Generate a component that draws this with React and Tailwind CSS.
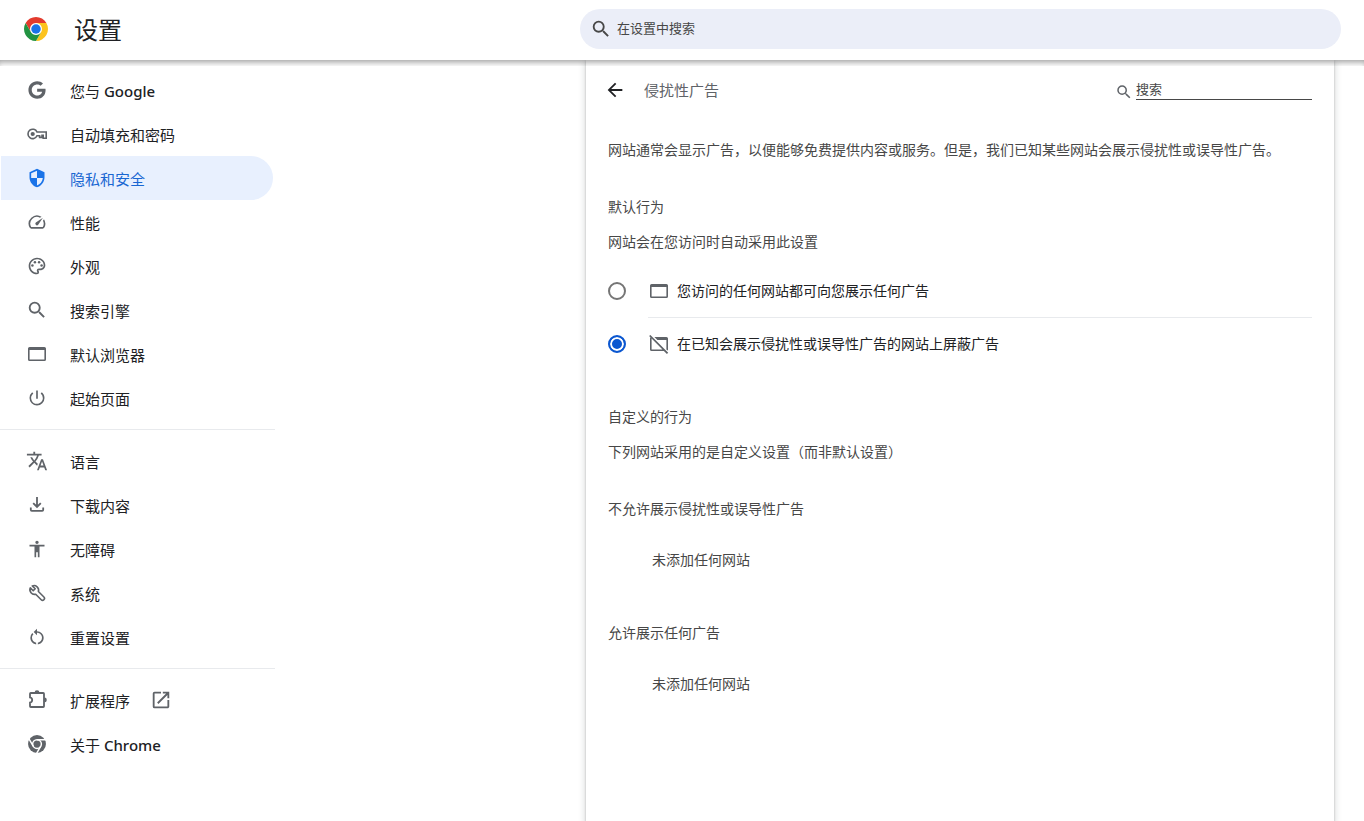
import { useState } from "react";
import {
  MdAccessibility,
  MdArrowBack,
  MdOpenInNew,
  MdOutlinePalette,
  MdOutlineSpeed,
  MdPowerSettingsNew,
  MdRestartAlt,
  MdSearch,
  MdSecurity,
  MdTranslate,
} from "react-icons/md";
import { FaGoogle } from "react-icons/fa";

const svgProps = { viewBox: "0 0 20 20", fill: "none", stroke: "currentColor", strokeWidth: 1.6, "aria-hidden": true };

function ChromeLogo({ className }) {
  return (
    <svg viewBox="0 0 48 48" className={className} aria-hidden="true">
      <circle cx="24" cy="24" r="12" fill="#fff" />
      <path fill="#e33b2e" d="M24 12h20.78A24 24 0 0 0 3.22 12l10.39 18A12 12 0 0 1 24 12Z" />
      <path fill="#fcc31e" d="M34.39 30 24 48a24 24 0 0 0 20.78-36H24a12 12 0 0 1 10.39 18Z" />
      <path fill="#229342" d="M13.61 30 3.22 12A24 24 0 0 0 24 48l10.39-18a12 12 0 0 1-20.78 0Z" />
      <circle cx="24" cy="24" r="9.5" fill="#1a73e8" />
    </svg>
  );
}

function ChromeMono({ className }) {
  return (
    <svg viewBox="0 0 48 48" className={className} aria-hidden="true">
      <circle cx="24" cy="24" r="21.5" fill="currentColor" />
      <g fill="none" stroke="#fff" strokeWidth="3.6">
        <circle cx="24" cy="24" r="10.5" />
        <path d="M24 13.5h22M14.9 29.2 4 10.3M33.1 29.2 22.1 48.2" />
      </g>
    </svg>
  );
}

function KeyIcon({ className }) {
  return (
    <svg {...svgProps} className={className}>
      <path d="M10 8h9.200v6.200h-3V11.400h-1.200v2h-2.400v-1.600h-2.600a4.700 4.700 0 1 1 0-3.800Z" />
      <circle cx="5.700" cy="10" r="2.100" fill="currentColor" stroke="none" />
    </svg>
  );
}

function WindowIcon({ className }) {
  return (
    <svg {...svgProps} stroke="none" fill="currentColor" fillRule="evenodd" className={className}>
      <path d="M2.6 3h14.8A1.6 1.6 0 0 1 19 4.6v10.8a1.6 1.6 0 0 1-1.6 1.6H2.6A1.6 1.6 0 0 1 1 15.4V4.6A1.6 1.6 0 0 1 2.6 3Zm0 3v9.4h14.8V6H2.6Z" />
    </svg>
  );
}

function WindowOffIcon({ className }) {
  return (
    <svg {...svgProps} stroke="none" fill="currentColor" fillRule="evenodd" className={className}>
      <path d="M5.4 3h12A1.6 1.6 0 0 1 19 4.6v10.8c0 .5-.2.9-.5 1.2l-1.1-1.1V6H8.4l-3-3Z" />
      <path d="M1.4.9 19.200 18.700l-1.300 1.300-3-3H2.6A1.6 1.6 0 0 1 1 15.4V4.6c0-.5.2-.9.5-1.2L.1 2.100 1.400.9Zm1.2 3.6v10.9h10.9L2.600 4.5Z" />
    </svg>
  );
}

function DownloadIcon({ className }) {
  return (
    <svg {...svgProps} strokeWidth="1.8" className={className}>
      <path d="M10 2v9.6M6.2 8.2 10 12l3.8-3.8M3.8 12.6v2.2c0 .6.4 1 1 1h10.4c.6 0 1-.4 1-1v-2.2" />
    </svg>
  );
}

function WrenchIcon({ className }) {
  return (
    <svg {...svgProps} strokeLinejoin="round" className={className}>
      <path d="M3.300 4.900 6.200 7.800 8.200 5.800 5.300 2.900A4.600 4.600 0 0 1 11.400 8.500L16.900 14a1.900 1.900 0 0 1-2.700 2.700L8.700 11.200A4.600 4.600 0 0 1 3.300 4.900Z" />
    </svg>
  );
}

function ExtensionIcon({ className }) {
  return (
    <svg {...svgProps} strokeWidth="1.8" className={className}>
      <path d="M3.8 3h12.4a.8.8 0 0 1 .8.8v12.4a.8.8 0 0 1-.8.8H3.8a.8.8 0 0 1-.8-.8v-3.6c1.4-.3 2.2-1.3 2.2-2.6S4.4 7.7 3 7.4V3.8a.8.8 0 0 1 .8-.8Z" />
      <path stroke="none" fill="currentColor" d="M7.6 2.6a2.400 2.400 0 0 1 4.800 0ZM17.400 7.600a2.400 2.400 0 0 1 0 4.800Z" />
    </svg>
  );
}

const groups = [
  [
    { label: "您与", latin: "Google", icon: FaGoogle, iconSize: "size-[18px]" },
    { label: "自动填充和密码", icon: KeyIcon },
    { label: "隐私和安全", icon: MdSecurity, active: true },
    { label: "性能", icon: MdOutlineSpeed },
    { label: "外观", icon: MdOutlinePalette },
    { label: "搜索引擎", icon: MdSearch, iconSize: "size-[22px]" },
    { label: "默认浏览器", icon: WindowIcon },
    { label: "起始页面", icon: MdPowerSettingsNew },
  ],
  [
    { label: "语言", icon: MdTranslate, iconSize: "size-[22px]" },
    { label: "下载内容", icon: DownloadIcon },
    { label: "无障碍", icon: MdAccessibility },
    { label: "系统", icon: WrenchIcon },
    { label: "重置设置", icon: MdRestartAlt },
  ],
  [
    { label: "扩展程序", icon: ExtensionIcon, external: true },
    { label: "关于", latin: "Chrome", icon: ChromeMono },
  ],
];

function NavItem({ label, latin, icon: Icon, iconSize = "size-5", active, external }) {
  return (
    <a
      href="#"
      aria-current={active ? "page" : undefined}
      className={`ml-px mr-0.5 flex h-11 items-center rounded-r-full pl-[26px] text-[15px] ${
        active ? "bg-[#e8f0fe] text-[#1967d2]" : "text-[#202124]"
      }`}
    >
      <span className={`flex size-5 items-center justify-center ${active ? "text-[#1a73e8]" : "text-[#5f6368]"}`}>
        <Icon className={`shrink-0 ${iconSize}`} />
      </span>
      <span className="ml-[23px] pt-px leading-5">
        {label}
        {latin && <span className="font-medium"> {latin}</span>}
      </span>
      {external && <MdOpenInNew className="ml-5 size-[22px] text-[#5f6368]" />}
    </a>
  );
}

function AdOption({ id, icon: Icon, checked, onChange, children }) {
  return (
    <div className="flex h-[52px] items-center">
      <input
        type="radio"
        name="ads"
        id={id}
        checked={checked}
        onChange={onChange}
        className="size-[18px] appearance-none rounded-full border-2 border-[#757575] checked:border-[#0b57d0] checked:bg-[#0b57d0] checked:shadow-[inset_0_0_0_2px_#fff]"
      />
      <label htmlFor={id} className="ml-[23px] flex items-center gap-2 text-[#202124]">
        <Icon className="size-5 text-[#5f6368]" />
        {children}
      </label>
    </div>
  );
}

export default function App() {
  const [choice, setChoice] = useState("block");
  return (
    <div className="flex min-h-screen flex-col bg-white font-['Noto_Sans','Noto_Sans_CJK_SC',sans-serif] text-[#202124]">
      <header className="relative z-10 flex h-[60px] items-center justify-between bg-white pl-6 pr-[23px]">
        <div className="flex items-center">
          <ChromeLogo className="mb-0.5 size-6" />
          <h1 className="ml-[26px] text-2xl">设置</h1>
        </div>
        <label className="mb-0.5 flex h-10 w-full max-w-[761px] items-center gap-[5px] rounded-full bg-[#ebeef8] pl-2.5 pr-4">
          <MdSearch className="size-[22px] text-[#474747]" />
          <input
            type="text"
            aria-label="在设置中搜索"
            placeholder="在设置中搜索"
            className="min-w-0 flex-1 bg-transparent text-[13px] outline-none placeholder:text-[#474747]"
          />
        </label>
        <div className="pointer-events-none absolute inset-x-0 top-full h-1.5 shadow-[inset_0_5px_6px_-3px_rgba(0,0,0,0.4)]" />
      </header>

      <div className="flex flex-1">
        <nav className="w-[275px] shrink-0 pt-2">
          {groups.map((items, i) => (
            <div key={i} className={i > 0 ? "mt-[9px] border-t border-[#e8eaed] pt-[9px]" : ""}>
              {items.map((item) => (
                <NavItem key={item.label} {...item} />
              ))}
            </div>
          ))}
        </nav>

        <main className="flex flex-1 justify-end pr-[30px]">
          <section className="w-full max-w-[748px] bg-white px-[22px] text-sm leading-5 text-[#474747] shadow-[0_1px_2px_0_rgba(60,64,67,0.3),0_2px_6px_2px_rgba(60,64,67,0.15)]">
            <div className="flex h-[60px] items-center">
              <button type="button" aria-label="返回" className="-ml-1 text-[#202124]">
                <MdArrowBack className="size-[22px]" />
              </button>
              <h2 className="ml-[18px] flex-1 text-[15px] text-[#5f6368]">侵扰性广告</h2>
              <label className="flex items-end gap-[3px]">
                <MdSearch className="mb-px size-[18px] text-[#5f6368]" />
                <input
                  type="text"
                  aria-label="搜索"
                  placeholder="搜索"
                  className="mb-0.5 h-[22px] w-44 border-b border-[#474747] bg-transparent text-[13px] outline-none placeholder:text-[#474747]"
                />
              </label>
            </div>

            <p className="mt-5">网站通常会显示广告，以便能够免费提供内容或服务。但是，我们已知某些网站会展示侵扰性或误导性广告。</p>

            <h3 className="mt-[37px]">默认行为</h3>
            <p className="mb-[13px] mt-[15px]">网站会在您访问时自动采用此设置</p>
            <AdOption id="ads-allow" icon={WindowIcon} checked={choice === "allow"} onChange={() => setChoice("allow")}>
              您访问的任何网站都可向您展示任何广告
            </AdOption>
            <hr className="ml-10 border-[#e8eaed]" />
            <AdOption id="ads-block" icon={WindowOffIcon} checked={choice === "block"} onChange={() => setChoice("block")}>
              在已知会展示侵扰性或误导性广告的网站上屏蔽广告
            </AdOption>

            <h3 className="mt-[37px]">自定义的行为</h3>
            <p className="mt-[15px]">下列网站采用的是自定义设置（而非默认设置）</p>

            <h3 className="mt-[37px]">不允许展示侵扰性或误导性广告</h3>
            <p className="mt-[31px] pl-11">未添加任何网站</p>

            <h3 className="mt-[53px]">允许展示任何广告</h3>
            <p className="mt-[31px] pl-11">未添加任何网站</p>
          </section>
        </main>
      </div>
    </div>
  );
}
